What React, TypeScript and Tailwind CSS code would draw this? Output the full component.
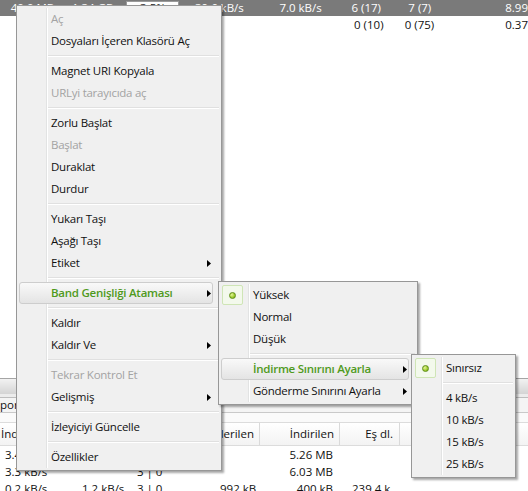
import React from 'react';

type Item =
  | { kind: 'item'; label: string; disabled?: boolean; sub?: boolean; active?: boolean; checked?: boolean }
  | { kind: 'sep' };

const it = (label: string, opts: Partial<Omit<Extract<Item, { kind: 'item' }>, 'kind' | 'label'>> = {}): Item => ({
  kind: 'item',
  label,
  ...opts,
});
const sep: Item = { kind: 'sep' };

const mainItems: Item[] = [
  it('Aç', { disabled: true }),
  it('Dosyaları İçeren Klasörü Aç'),
  sep,
  it('Magnet URI Kopyala'),
  it('URLyi tarayıcıda aç', { disabled: true }),
  sep,
  it('Zorlu Başlat'),
  it('Başlat', { disabled: true }),
  it('Duraklat'),
  it('Durdur'),
  sep,
  it('Yukarı Taşı'),
  it('Aşağı Taşı'),
  it('Etiket', { sub: true }),
  sep,
  it('Band Genişliği Ataması', { sub: true, active: true }),
  sep,
  it('Kaldır'),
  it('Kaldır Ve', { sub: true }),
  sep,
  it('Tekrar Kontrol Et', { disabled: true }),
  it('Gelişmiş', { sub: true }),
  sep,
  it('İzleyiciyi Güncelle'),
  sep,
  it('Özellikler'),
];

const bandItems: Item[] = [
  it('Yüksek', { checked: true }),
  it('Normal'),
  it('Düşük'),
  sep,
  it('İndirme Sınırını Ayarla', { sub: true, active: true }),
  it('Gönderme Sınırını Ayarla', { sub: true }),
];

const limitItems: Item[] = [
  it('Sınırsız', { checked: true }),
  sep,
  it('4 kB/s'),
  it('10 kB/s'),
  it('15 kB/s'),
  it('25 kB/s'),
];

const font = "font-['Open_Sans','Noto_Sans',sans-serif]";

function Arrow() {
  return (
    <svg width="4" height="7" viewBox="0 0 4 7" className="block">
      <path d="M0 0 L4 3.5 L0 7 Z" fill="#000" />
    </svg>
  );
}

function Check() {
  return (
    <div className="flex h-[20px] w-[21px] items-center justify-center rounded-[2px] border border-[#cfe5b6] bg-[#f3f9ec]">
      <div className="h-[7px] w-[7px] rounded-full border border-[#5f8f17] bg-[radial-gradient(circle_at_35%_35%,#e4f59a,#9ccb2c_60%,#6e9e1a)]" />
    </div>
  );
}

function Menu({ items, className }: { items: Item[]; className: string }) {
  return (
    <div
      className={`absolute border border-[#979797] bg-[#f0f0f0] py-[2px] tracking-[-0.25px] shadow-[2px_2px_2px_rgba(0,0,0,0.35)] ${className}`}
    >
      <div className="absolute bottom-[2px] left-[29px] top-[2px] w-[2px] border-l border-r border-l-[#e2e3e3] border-r-white" />
      {items.map((item, i) =>
        item.kind === 'sep' ? (
          <div key={i} className="flex h-[8px] items-center pl-[31px] pr-[2px]">
            <div className="h-[2px] w-full border-b border-t border-b-white border-t-[#e0e0e0]" />
          </div>
        ) : (
          <div
            key={i}
            className={`relative mx-[2px] mr-[8px] flex h-[22px] items-center rounded-[3px] border ${
              item.active
                ? 'border-[#cdcdcd] bg-[linear-gradient(#f9f9f9,#e4e4e4)]'
                : 'border-transparent'
            }`}
          >
            <div className="flex w-[31px] shrink-0 items-center">{item.checked && <Check />}</div>
            <span
              className={`whitespace-nowrap text-[11.5px] ${
                item.active ? 'font-semibold text-[#4f9a1c]' : item.disabled ? 'text-[#a3a3a3]' : 'text-[#111]'
              }`}
            >
              {item.label}
            </span>
            {item.sub && (
              <span className="ml-auto mr-[1px]">
                <Arrow />
              </span>
            )}
          </div>
        ),
      )}
    </div>
  );
}

export default function App() {
  return (
    <div className={`relative flex h-[491px] w-[528px] flex-col overflow-hidden bg-white ${font} text-[11.5px] leading-none`}>
      {/* selected torrent row */}
      <div className="flex h-[16px] shrink-0 items-center bg-[#7a7a7a] text-white">
        <div className="w-[58px] pr-[3px] text-right">40.0 MB</div>
        <div className="w-[60px] pr-[3px] text-right">1.34 GB</div>
        <div className="w-[72px] pl-[10px]">
          <div className="flex h-[14px] w-[53px] items-center justify-center border border-[#9a9a9a] bg-white text-[#222]">3.5%</div>
        </div>
        <div className="w-[60px] pr-[3px] text-right">39.6 kB/s</div>
        <div className="w-[79px] pr-[3px] text-right">7.0 kB/s</div>
        <div className="w-[60px] pr-[3px] text-right">6 (17)</div>
        <div className="w-[51px] pr-[3px] text-right">7 (7)</div>
        <div className="pl-[71px]">8.99</div>
      </div>
      <div className="flex h-[17px] shrink-0 items-center text-[#111]">
        <div className="w-[389px] pr-[3px] text-right">0 (10)</div>
        <div className="w-[51px] pr-[3px] text-right">0 (75)</div>
        <div className="pl-[68px]">0.37</div>
      </div>
      <div className="flex-1" />

      {/* lower detail panel */}
      <div className="h-[113px] shrink-0 text-[#111]">
        <div className="h-[16px] border-t border-[#a5a5a5] bg-[linear-gradient(#f2f2f2,#d4d4d4)]" />
        <div className="h-[4px] border-b border-[#bdbdbd] bg-[#ececec]" />
        <div className="flex h-[15px] items-center border-b border-[#c9c9c9] bg-[#f4f4f4]">
          <span>por</span>
        </div>
        <div className="h-[9px] bg-[#fafafa]" />
        <div className="flex h-[24px] items-center border-b border-t border-[#dcdcdc] bg-[linear-gradient(#ffffff,#f3f3f3)]">
          <div className="w-[200px] pl-[1px]">İndirme Hızı</div>
          <div className="flex h-full w-[60px] items-center justify-end border-r border-[#dadada] pr-[5px]">Gönderilen</div>
          <div className="flex h-full w-[80px] items-center justify-end border-r border-[#dadada] pr-[5px]">İndirilen</div>
          <div className="flex h-full w-[60px] items-center justify-end border-r border-[#dadada] pr-[6px]">Eş dl.</div>
        </div>
        <div className="flex h-[17px] items-center">
          <div className="w-[260px] pl-[5px]">3.4 kB/s</div>
          <div className="w-[80px] pr-[7px] text-right">5.26 MB</div>
        </div>
        <div className="flex h-[17px] items-center">
          <div className="w-[130px] pl-[5px]">3.3 kB/s</div>
          <div className="w-[130px] pl-[7px]">3 | 0</div>
          <div className="w-[80px] pr-[7px] text-right">6.03 MB</div>
        </div>
        <div className="flex h-[17px] items-center">
          <div className="w-[80px] pl-[5px]">0.2 kB/s</div>
          <div className="w-[50px] pl-[2px]">1.2 kB/s</div>
          <div className="w-[70px] pl-[7px]">3 | 0</div>
          <div className="w-[60px] pl-[20px]">992 kB</div>
          <div className="w-[80px] pr-[7px] text-right">400 kB</div>
          <div className="pl-[12px]">239.4 k</div>
        </div>
      </div>

      <Menu items={mainItems} className="left-[16px] top-[5px] w-[206px]" />
      <Menu items={bandItems} className="left-[218px] top-[281px] w-[200px]" />
      <Menu items={limitItems} className="left-[411px] top-[354px] w-[105px]" />
    </div>
  );
}
